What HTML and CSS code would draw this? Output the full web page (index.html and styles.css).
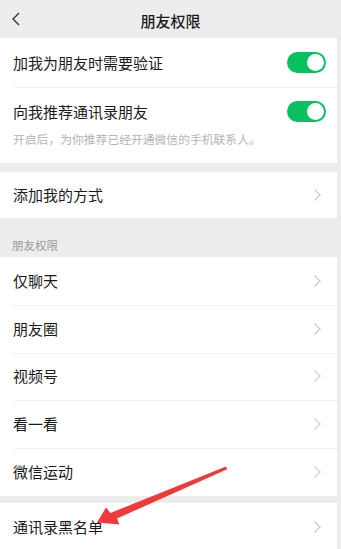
FILE: index.html
```html
<!DOCTYPE html>
<html lang="zh">
<head>
<meta charset="utf-8">
<link rel="stylesheet" href="styles.css">
</head>
<body>
<div class="page">
  <header class="topbar">
    <svg class="back" width="10" height="14" viewBox="0 0 10 14"><path d="M8 1 L2 7 L8 13" fill="none" stroke="#333" stroke-width="1.4"/></svg>
    <div class="title">朋友权限</div>
  </header>

  <section class="group first">
    <div class="row">
      <span class="label">加我为朋友时需要验证</span>
      <span class="toggle"><span class="knob"></span></span>
    </div>
    <div class="row tall">
      <div class="stack">
        <span class="label">向我推荐通讯录朋友</span>
        <span class="hint">开启后，为你推荐已经开通微信的手机联系人。</span>
      </div>
      <span class="toggle"><span class="knob"></span></span>
    </div>
  </section>

  <section class="group gap">
    <div class="row nav"><span class="label">添加我的方式</span><span class="chev"></span></div>
  </section>

  <div class="section-label">朋友权限</div>

  <section class="group">
    <div class="row nav"><span class="label">仅聊天</span><span class="chev"></span></div>
    <div class="row nav"><span class="label">朋友圈</span><span class="chev"></span></div>
    <div class="row nav"><span class="label">视频号</span><span class="chev"></span></div>
    <div class="row nav"><span class="label">看一看</span><span class="chev"></span></div>
    <div class="row nav"><span class="label">微信运动</span><span class="chev"></span></div>
  </section>

  <section class="group gap-small">
    <div class="row nav"><span class="label">通讯录黑名单</span><span class="chev"></span></div>
  </section>

  <svg class="arrow" width="341" height="549" viewBox="0 0 341 549">
    <path d="M226 466.5 L227.2 469.2 L117 518.5 L119.5 524.5 L97 522.5 L106 507.5 L110.5 513 Z" fill="#f03a3a"/>
  </svg>
</div>
</body>
</html>
```

FILE: styles.css
```css
html, body {
  margin: 0;
  padding: 0;
  background: #ededed;
}
body {
  font-family: "Noto Sans CJK SC", "Noto Sans", sans-serif;
  color: #1a1a1a;
  overflow: hidden;
}
.page {
  position: relative;
  width: 341px;
  height: 549px;
  overflow: hidden;
  background: #ededed;
}
.topbar {
  height: 38px;
  display: flex;
  align-items: center;
  justify-content: center;
  position: relative;
}
.back {
  position: absolute;
  left: 11px;
  top: 12px;
}
.title {
  font-size: 15px;
  font-weight: 500;
  color: #1a1a1a;
  margin-top: 2px;
}
.group {
  background: #fff;
  margin-right: 4px;
}
.group.gap { margin-top: 9px; }
.group.gap-small { margin-top: 7px; }
.row {
  height: 48px;
  display: flex;
  align-items: center;
  justify-content: space-between;
  padding: 0 16px 0 13px;
  position: relative;
}
.first .row:first-child { height: 49px; }
.row + .row::before {
  content: "";
  position: absolute;
  left: 13px;
  right: 0;
  top: 0;
  border-top: 1px solid #f0f0f0;
}
.row.tall {
  height: 76px;
  align-items: flex-start;
}
.row.tall .toggle { margin-top: 14px; }
.stack {
  display: flex;
  flex-direction: column;
  padding-top: 14px;
}
.label {
  font-size: 15px;
  line-height: 22px;
  color: #1a1a1a;
}
.hint {
  font-size: 11.8px;
  line-height: 16px;
  margin-top: 8px;
  color: #b4b4b4;
}
.toggle {
  width: 39px;
  height: 21px;
  border-radius: 11px;
  background: #07c160;
  position: relative;
  margin-right: -5px;
}
.knob {
  position: absolute;
  right: 2px;
  top: 2px;
  width: 17px;
  height: 17px;
  border-radius: 50%;
  background: #fff;
}
.chev {
  width: 7px;
  height: 7px;
  border-top: 1.3px solid #c2c2c2;
  border-right: 1.3px solid #c2c2c2;
  transform: rotate(45deg);
  margin-right: 2px;
}
.row.nav { height: 47.8px; }
.gap .row.nav { height: 46px; }
.section-label {
  height: 39px;
  box-sizing: border-box;
  padding: 19px 0 0 12px;
  font-size: 11.5px;
  line-height: 16px;
  color: #9a9a9a;
}
.arrow {
  position: absolute;
  left: 0;
  top: 0;
  pointer-events: none;
}
```
